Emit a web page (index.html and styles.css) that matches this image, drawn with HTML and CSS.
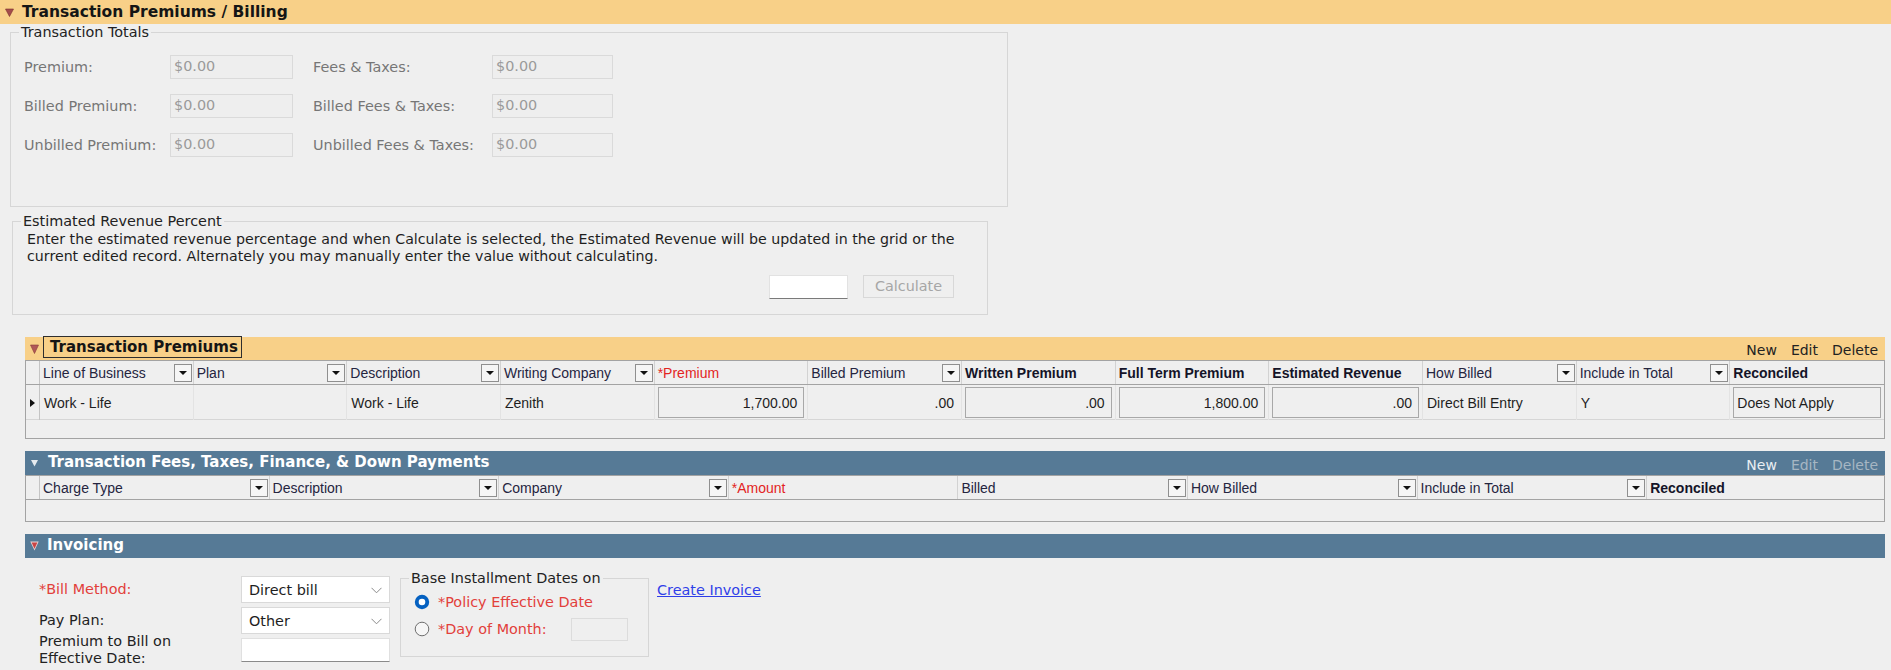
FILE: index.html
```html
<!DOCTYPE html>
<html>
<head>
<meta charset="utf-8">
<title>Transaction Premiums / Billing</title>
<link rel="stylesheet" href="styles.css">
</head>
<body>
<div class="main-bar">
  <svg class="tri-main" width="9" height="9" viewBox="0 0 9 9"><polygon points="0.5,1 8.5,1 4.5,8.5" fill="#a44c4c" stroke="#7a2e2e" stroke-width="0.6"/></svg>
  <span class="main-title">Transaction Premiums / Billing</span>
</div>

<fieldset class="totals">
  <legend>Transaction Totals</legend>
  <div class="totals-grid">
    <span class="lbl">Premium:</span><div class="ro">$0.00</div>
    <span class="lbl">Fees &amp; Taxes:</span><div class="ro">$0.00</div>
    <span class="lbl">Billed Premium:</span><div class="ro">$0.00</div>
    <span class="lbl">Billed Fees &amp; Taxes:</span><div class="ro">$0.00</div>
    <span class="lbl">Unbilled Premium:</span><div class="ro">$0.00</div>
    <span class="lbl">Unbilled Fees &amp; Taxes:</span><div class="ro">$0.00</div>
  </div>
</fieldset>

<fieldset class="estrev">
  <legend>Estimated Revenue Percent</legend>
  <p class="est-text">Enter the estimated revenue percentage and when Calculate is selected, the Estimated Revenue will be updated in the grid or the<br>current edited record. Alternately you may manually enter the value without calculating.</p>
  <div class="calc-row">
    <div class="pct-input"></div>
    <div class="calc-btn">Calculate</div>
  </div>
</fieldset>

<section class="panel panel-prem">
  <div class="panel-bar bar-orange">
    <svg class="tri-panel" width="9" height="10" viewBox="0 0 9 10"><polygon points="0.5,1 8.5,1 4.5,9.5" fill="#b05858" stroke="#8a3a3a" stroke-width="0.6"/></svg>
    <span class="panel-title focus">Transaction Premiums</span>
    <div class="actions"><span>New</span><span>Edit</span><span>Delete</span></div>
  </div>
  <div class="grid">
    <div class="grow hrow cols-prem">
      <div class="hcell rh"></div>
      <div class="hcell">Line of Business<span class="dd"></span></div>
      <div class="hcell">Plan<span class="dd"></span></div>
      <div class="hcell">Description<span class="dd"></span></div>
      <div class="hcell">Writing Company<span class="dd"></span></div>
      <div class="hcell req">*Premium</div>
      <div class="hcell">Billed Premium<span class="dd"></span></div>
      <div class="hcell bold">Written Premium</div>
      <div class="hcell bold">Full Term Premium</div>
      <div class="hcell bold">Estimated Revenue</div>
      <div class="hcell">How Billed<span class="dd"></span></div>
      <div class="hcell">Include in Total<span class="dd"></span></div>
      <div class="hcell bold">Reconciled</div>
    </div>
    <div class="grow drow cols-prem">
      <div class="dcell rh"><span class="row-ind"></span></div>
      <div class="dcell">Work - Life</div>
      <div class="dcell"></div>
      <div class="dcell">Work - Life</div>
      <div class="dcell">Zenith</div>
      <div class="dcell boxed"><div class="box num">1,700.00</div></div>
      <div class="dcell num">.00</div>
      <div class="dcell boxed"><div class="box num">.00</div></div>
      <div class="dcell boxed"><div class="box num">1,800.00</div></div>
      <div class="dcell boxed"><div class="box num">.00</div></div>
      <div class="dcell">Direct Bill Entry</div>
      <div class="dcell">Y</div>
      <div class="dcell boxed"><div class="box">Does Not Apply</div></div>
    </div>
    <div class="empty-row prem-empty"></div>
  </div>
</section>

<section class="panel panel-fees">
  <div class="panel-bar bar-blue">
    <svg class="tri-blue" width="7" height="8" viewBox="0 0 7 8"><polygon points="0,1 7,1 3.5,7.5" fill="#e6ebef"/></svg>
    <span class="panel-title light">Transaction Fees, Taxes, Finance, &amp; Down Payments</span>
    <div class="actions dim"><span class="on">New</span><span>Edit</span><span>Delete</span></div>
  </div>
  <div class="grid">
    <div class="grow hrow cols-fees">
      <div class="hcell rh"></div>
      <div class="hcell">Charge Type<span class="dd"></span></div>
      <div class="hcell">Description<span class="dd"></span></div>
      <div class="hcell">Company<span class="dd"></span></div>
      <div class="hcell req">*Amount</div>
      <div class="hcell">Billed<span class="dd"></span></div>
      <div class="hcell">How Billed<span class="dd"></span></div>
      <div class="hcell">Include in Total<span class="dd"></span></div>
      <div class="hcell bold">Reconciled</div>
    </div>
    <div class="empty-row fees-empty"></div>
  </div>
</section>

<section class="panel panel-inv">
  <div class="panel-bar bar-blue">
    <svg class="tri-inv" width="9" height="10" viewBox="0 0 9 10"><polygon points="0.3,0.6 8.7,0.6 4.5,9.6" fill="#ead6d6"/><polygon points="1.6,1.4 7.4,1.4 4.5,7.8" fill="#c94444"/></svg>
    <span class="panel-title light">Invoicing</span>
  </div>
  <div class="inv-body">
    <div class="inv-form">
      <span class="flbl req-lbl">*Bill Method:</span>
      <div class="sel">Direct bill<svg class="chev" width="11" height="7" viewBox="0 0 11 7"><polyline points="0.5,0.8 5.5,5.8 10.5,0.8" fill="none" stroke="#8a8a8a" stroke-width="1"/></svg></div>
      <span class="flbl">Pay Plan:</span>
      <div class="sel">Other<svg class="chev" width="11" height="7" viewBox="0 0 11 7"><polyline points="0.5,0.8 5.5,5.8 10.5,0.8" fill="none" stroke="#8a8a8a" stroke-width="1"/></svg></div>
      <span class="flbl two">Premium to Bill on<br>Effective Date:</span>
      <div class="txt"></div>
    </div>
    <fieldset class="base">
      <legend>Base Installment Dates on</legend>
      <div class="radio-row r1">
        <svg class="radio" width="16" height="16" viewBox="0 0 16 16"><circle cx="8" cy="8" r="7.2" fill="#0561c1"/><circle cx="8" cy="8" r="3.3" fill="#ffffff"/></svg>
        <span class="req-lbl">*Policy Effective Date</span>
      </div>
      <div class="radio-row r2">
        <svg class="radio" width="16" height="16" viewBox="0 0 16 16"><circle cx="8" cy="8" r="6.8" fill="#f6f6f6" stroke="#6e6e6e" stroke-width="1"/></svg>
        <span class="req-lbl dom">*Day of Month:</span>
        <div class="day-input"></div>
      </div>
    </fieldset>
    <a class="create" href="#">Create Invoice</a>
  </div>
</section>
</body>
</html>
```

FILE: styles.css
```css
* { box-sizing: border-box; }

html, body {
  margin: 0;
  padding: 0;
}

body {
  width: 1891px;
  height: 670px;
  overflow: hidden;
  background: #efefef;
  font-family: "DejaVu Sans", Verdana, sans-serif;
  font-size: 14.4px;
  color: #222;
}

/* ---------- top bar ---------- */
.main-bar {
  height: 24px;
  background: #f8d088;
  display: flex;
  align-items: center;
}
.tri-main { margin-left: 5px; flex: none; }
.main-title {
  margin-left: 8px;
  font-weight: bold;
  font-size: 15.5px;
  color: #151515;
}

/* ---------- fieldsets ---------- */
fieldset {
  margin: 0;
  padding: 0;
  border: 1px solid #d6d6d6;
  min-width: 0;
}
legend {
  padding: 0 2px;
  margin-left: 8px;
  line-height: 16px;
  color: #222;
}

.totals {
  margin-left: 10px;
  width: 998px;
  height: 183px;
  padding-top: 15px;
}
.totals-grid {
  margin-left: 13px;
  display: grid;
  grid-template-columns: 146px 143px 179px 121px;
  grid-auto-rows: 24px;
  row-gap: 15px;
}
.lbl {
  color: #767676;
  line-height: 24px;
  white-space: nowrap;
}
.ro {
  width: 123px;
  height: 24px;
  border: 1px solid #dadada;
  background: #eeeeee;
  color: #9a9a9a;
  padding-left: 3px;
  line-height: 20px;
}
.totals-grid .ro:nth-child(4n) { width: 121px; }

.estrev {
  margin: 6px 0 0 12px;
  width: 976px;
  padding: 0 33px 15px 0;
}
.est-text {
  margin: 2px 0 0 14px;
  line-height: 17px;
  font-size: 14.2px;
  white-space: nowrap;
  color: #1e1e1e;
}
.calc-row {
  margin-top: 10px;
  display: flex;
  justify-content: flex-end;
  align-items: flex-start;
  gap: 15px;
}
.pct-input {
  width: 79px;
  height: 24px;
  background: #fff;
  border: 1px solid #e2e2e2;
  border-bottom: 1px solid #7a7a7a;
}
.calc-btn {
  width: 91px;
  height: 23px;
  border: 1px solid #d8d8d8;
  background: #efefef;
  color: #a6a6a6;
  text-align: center;
  line-height: 21px;
}

/* ---------- panels ---------- */
.panel {
  margin-left: 25px;
  width: 1860px;
}
.panel-prem { margin-top: 22px; }
.panel-fees { margin-top: 12px; }
.panel-inv { margin-top: 12px; }

.panel-bar {
  height: 23px;
  display: flex;
  align-items: center;
}
.panel-fees .panel-bar { height: 24px; }
.panel-inv .panel-bar { height: 24px; }
.bar-orange { background: #f8d088; }
.bar-blue { background: #567a96; }

.tri-panel { margin-left: 5px; flex: none; }
.tri-blue { margin-left: 6px; flex: none; }
.tri-inv { margin-left: 5px; flex: none; }

.panel-title {
  font-weight: bold;
  font-size: 15px;
  white-space: nowrap;
}
.panel-title.focus {
  margin-left: 4px;
  height: 22px;
  line-height: 20px;
  border: 1px solid #2e2e2e;
  padding: 0 3px 0 6px;
  color: #151515;
  align-self: flex-start;
  margin-top: -1px;
}
.panel-title.light {
  color: #ffffff;
  margin-left: 10px;
}
.panel-fees .panel-title.light { margin-top: -3px; }
.panel-inv .panel-title.light { margin-left: 8px; margin-top: -2px; }

.actions {
  margin-left: auto;
  align-self: flex-end;
  display: flex;
  gap: 14px;
  padding-right: 7px;
  line-height: 18px;
  padding-bottom: 1px;
  font-size: 14px;
  color: #222;
}
.actions.dim { color: #a6b6c3; }
.actions.dim .on { color: #e9eef2; }

/* ---------- grids ---------- */
.grid {
  border: 1px solid #a3a3a3;
  background: #efefef;
  font-family: "Liberation Sans", Arial, sans-serif;
  font-size: 14px;
}
.grow { display: grid; }
.cols-prem { grid-template-columns: 14px repeat(12, 1fr); }
.cols-fees { grid-template-columns: 14px repeat(7, 229.6px) 1fr; }

.hrow {
  height: 24px;
  border-bottom: 1px solid #a3a3a3;
}
.hcell {
  display: flex;
  align-items: center;
  justify-content: space-between;
  padding: 0 1px 0 3px;
  border-right: 1px solid #d2d2d2;
  color: #25253f;
  white-space: nowrap;
  overflow: hidden;
}
.hcell:last-child { border-right: none; }
.hcell.rh { border-right: 1px solid #c4c4c4; }
.hcell.req { color: #e3241e; }
.hcell.bold { font-weight: bold; color: #141428; }

.dd {
  width: 18px;
  height: 18px;
  flex: none;
  border: 1px solid #8f8f8f;
  background: #f5f5f5;
  position: relative;
}
.dd::after {
  content: "";
  position: absolute;
  left: 4px;
  top: 6px;
  border-left: 4px solid transparent;
  border-right: 4px solid transparent;
  border-top: 4px solid #111;
}

.drow {
  height: 35px;
  border-bottom: 1px solid #d6d6d6;
}
.dcell {
  display: flex;
  align-items: center;
  padding: 0 4px;
  border-right: 1px solid #e3e3e3;
  color: #1e1e1e;
  white-space: nowrap;
}
.dcell:last-child { border-right: none; }
.dcell.rh {
  padding: 0;
  justify-content: center;
  border-right: 1px solid #c4c4c4;
}
.dcell.num { justify-content: flex-end; padding-right: 7px; }
.dcell.boxed { padding: 2px 3px 2px 3px; }
.row-ind {
  width: 0;
  height: 0;
  border-top: 4.5px solid transparent;
  border-bottom: 4.5px solid transparent;
  border-left: 5px solid #111;
}
.box {
  flex: 1;
  height: 31px;
  border: 1px solid #a8a8a8;
  background: #efefef;
  display: flex;
  align-items: center;
  padding: 0 3px;
  white-space: nowrap;
}
.box.num { justify-content: flex-end; padding-right: 6px; }

.prem-empty { height: 18px; }
.fees-empty { height: 21px; }

/* ---------- invoicing ---------- */
.inv-body {
  display: flex;
  align-items: flex-start;
  padding-left: 14px;
  margin-top: 12px;
}
.inv-form {
  margin-top: 6px;
  display: grid;
  grid-template-columns: 202px 149px;
  grid-template-rows: 27px 27px 24px;
  row-gap: 4px;
}
.flbl {
  align-self: center;
  line-height: 17px;
  color: #222;
  white-space: nowrap;
}
.req-lbl { color: #e2403b; }
.sel {
  position: relative;
  background: #fff;
  border: 1px solid #d9d9d9;
  display: flex;
  align-items: center;
  padding-left: 7px;
  color: #1e1e1e;
}
.chev { position: absolute; right: 7px; top: 10px; }
.txt {
  background: #fff;
  border: 1px solid #e0e0e0;
  border-bottom: 1px solid #8a8a8a;
}

.base {
  margin-left: 10px;
  width: 249px;
  height: 87px;
}
.radio-row {
  display: flex;
  align-items: center;
  height: 20px;
  padding-left: 13px;
}
.radio-row.r1 { margin-top: 6px; }
.radio-row.r2 { margin-top: 7px; }
.radio { flex: none; margin-right: 8px; }
.dom { width: 133px; white-space: nowrap; }
.day-input {
  width: 57px;
  height: 23px;
  border: 1px solid #dcdcdc;
  background: #efefef;
}

.create {
  margin-left: 8px;
  margin-top: 12px;
  line-height: 17px;
  color: #2f3fe8;
  text-decoration: underline;
  white-space: nowrap;
}
```
